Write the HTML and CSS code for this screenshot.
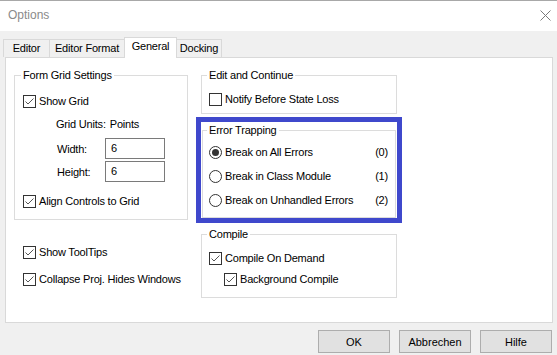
FILE: index.html
```html
<!DOCTYPE html>
<html lang="en">
<head>
    <meta charset="UTF-8">
    <title>Options</title>
    <link rel="stylesheet" href="styles.css">
</head>
<body>
<div class="window">
    <header class="titlebar">
        <span class="title">Options</span>
        <svg class="close" width="11" height="11" viewBox="0 0 11 11"><path d="M0.5 0.5L10.5 10.5M10.5 0.5L0.5 10.5" stroke="#7a7a7a" stroke-width="1" fill="none"/></svg>
    </header>
    <div class="content">
        <nav class="tabs">
            <span class="tab tab_editor">Editor</span>
            <span class="tab tab_format">Editor Format</span>
            <span class="tab tab_general active">General</span>
            <span class="tab tab_docking">Docking</span>
        </nav>
        <section class="panel">
            <div class="col col_left">
                <fieldset class="group grid_group">
                    <legend>Form Grid Settings</legend>
                    <label class="check"><span class="box"><svg width="11" height="11" viewBox="0 0 11 11"><path d="M1.5 5.5L4 8L9.5 2.5" stroke="#555" fill="none"/></svg></span>Show Grid</label>
                    <div class="units"><span class="lbl">Grid Units:</span><span class="val">Points</span></div>
                    <div class="field"><span class="lbl">Width:</span><span class="input">6</span></div>
                    <div class="field field_second"><span class="lbl">Height:</span><span class="input">6</span></div>
                    <label class="check align_row"><span class="box"><svg width="11" height="11" viewBox="0 0 11 11"><path d="M1.5 5.5L4 8L9.5 2.5" stroke="#555" fill="none"/></svg></span>Align Controls to Grid</label>
                </fieldset>
                <div class="loose">
                    <label class="check"><span class="box"><svg width="11" height="11" viewBox="0 0 11 11"><path d="M1.5 5.5L4 8L9.5 2.5" stroke="#555" fill="none"/></svg></span>Show ToolTips</label>
                    <label class="check"><span class="box"><svg width="11" height="11" viewBox="0 0 11 11"><path d="M1.5 5.5L4 8L9.5 2.5" stroke="#555" fill="none"/></svg></span>Collapse Proj. Hides Windows</label>
                </div>
            </div>
            <div class="col col_right">
                <fieldset class="group edit_group">
                    <legend>Edit and Continue</legend>
                    <label class="check"><span class="box"></span>Notify Before State Loss</label>
                </fieldset>
                <div class="highlight">
                    <fieldset class="group error_group">
                        <legend>Error Trapping</legend>
                        <div class="option"><label class="check"><span class="radio on"></span>Break on All Errors</label><span>(0)</span></div>
                        <div class="option"><label class="check"><span class="radio"></span>Break in Class Module</label><span>(1)</span></div>
                        <div class="option"><label class="check"><span class="radio"></span>Break on Unhandled Errors</label><span>(2)</span></div>
                    </fieldset>
                </div>
                <fieldset class="group compile_group">
                    <legend>Compile</legend>
                    <label class="check"><span class="box"><svg width="11" height="11" viewBox="0 0 11 11"><path d="M1.5 5.5L4 8L9.5 2.5" stroke="#555" fill="none"/></svg></span>Compile On Demand</label>
                    <label class="check indent"><span class="box"><svg width="11" height="11" viewBox="0 0 11 11"><path d="M1.5 5.5L4 8L9.5 2.5" stroke="#555" fill="none"/></svg></span>Background Compile</label>
                </fieldset>
            </div>
        </section>
        <footer class="buttons">
            <button class="btn">OK</button>
            <button class="btn">Abbrechen</button>
            <button class="btn">Hilfe</button>
        </footer>
    </div>
</div>
</body>
</html>
```

FILE: styles.css
```css
* {
    margin: 0;
    padding: 0;
    box-sizing: border-box;
}

body {
    font-family: "Liberation Sans", Arial, sans-serif;
    font-size: 11px;
    letter-spacing: -0.2px;
    line-height: 16px;
    color: #000;
    background: #f0f0f0;
}

.window {
    width: 557px;
    height: 355px;
    display: flex;
    flex-direction: column;
    background: #f0f0f0;
    border-top: 1px solid #a8a8a8;
}

.titlebar {
    height: 30px;
    background: #fff;
    display: flex;
    align-items: center;
    justify-content: space-between;
    padding: 0 6px 2px 8px;
}

.title {
    font-size: 12px;
    color: #8a8a8a;
    letter-spacing: 0;
}

.content {
    flex: 1;
    display: flex;
    flex-direction: column;
    padding: 6px 4px 0 5px;
}

/* tabs */
.tabs {
    display: flex;
    align-items: flex-start;
    height: 21px;
    margin-left: -2px;
    margin-bottom: -1px;
    position: relative;
    z-index: 1;
}

.tab {
    height: 18px;
    margin-top: 2px;
    border: 1px solid #d9d9d9;
    border-bottom: 0;
    background: #f0f0f0;
    line-height: 17px;
    text-align: center;
    white-space: nowrap;
}

.tab + .tab {
    margin-left: -1px;
}

.tab_editor { width: 47px; }
.tab_format { width: 76px; }
.tab_general { width: 53px; }
.tab_docking { width: 46px; }

.tab.active {
    height: 21px;
    margin-top: 0;
    background: #fff;
    line-height: 16px;
}

/* panel */
.panel {
    height: 266px;
    border: 1px solid #d9d9d9;
    background: #fff;
    display: flex;
    gap: 13px;
    padding: 9px 0 0 8px;
}

.col {
    display: flex;
    flex-direction: column;
}

.col_left {
    width: 174px;
}

.col_right {
    width: 196px;
}

.group {
    border: 1px solid #dcdcdc;
    min-width: 0;
}

.group legend {
    padding: 0 2px;
    margin-left: -2px;
    line-height: 16px;
}

.check {
    display: flex;
    align-items: center;
    gap: 3px;
    height: 16px;
    white-space: nowrap;
}

.box {
    width: 13px;
    height: 13px;
    border: 1px solid #333;
    background: #fff;
    display: flex;
}

.radio {
    width: 13px;
    height: 13px;
    border: 1px solid #333;
    border-radius: 50%;
    background: #fff;
    display: flex;
    align-items: center;
    justify-content: center;
}

.radio.on::after {
    content: "";
    width: 7px;
    height: 7px;
    border-radius: 50%;
    background: #333;
}

/* form grid */
.grid_group {
    padding: 10px 7px 10px 8px;
}

.units {
    display: flex;
    gap: 4px;
    margin: 7px 0 0 33px;
    white-space: nowrap;
}

.field {
    display: flex;
    align-items: center;
    margin: 6px 0 0 34px;
}

.field_second {
    margin-top: 2px;
}

.field .lbl {
    width: 48px;
}

.input {
    width: 60px;
    height: 21px;
    border: 1px solid #7a7a7a;
    padding: 0 5px;
    line-height: 19px;
}

.align_row {
    margin-top: 11px;
}

.loose {
    display: flex;
    flex-direction: column;
    gap: 11px;
    margin-top: 24px;
    padding-left: 9px;
}

/* right side */
.edit_group {
    padding: 8px 7px 6px 7px;
}

.highlight {
    margin: 3px -5px 0;
    border: 5px solid #3f48cc;
    padding: 0 1px;
}

.error_group {
    padding: 6px 7px 9px 6px;
    display: flex;
    flex-direction: column;
    gap: 8px;
}

.option {
    display: flex;
    justify-content: space-between;
    height: 16px;
}

.compile_group {
    margin-top: 3px;
    padding: 8px 7px 10px 7px;
}

.indent {
    margin: 5px 0 0 15px;
}

/* buttons */
.buttons {
    display: flex;
    justify-content: flex-end;
    gap: 9px;
    margin-top: 7px;
    padding-right: 1px;
}

.btn {
    width: 72px;
    height: 23px;
    background: #e1e1e1;
    border: 1px solid #adadad;
    font: inherit;
    color: #000;
}
```
